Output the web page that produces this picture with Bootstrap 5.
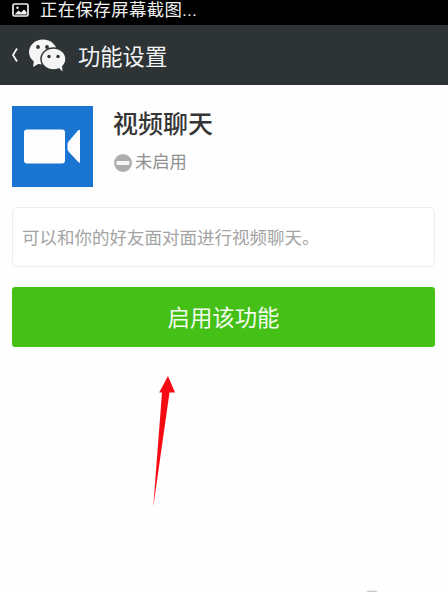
<!DOCTYPE html>
<html lang="zh">
<head>
<meta charset="utf-8">
<title>功能设置</title>
<link href="https://cdn.jsdelivr.net/npm/bootstrap@5.3.0/dist/css/bootstrap.min.css" rel="stylesheet">
<style>
html,body{width:448px;height:592px;overflow:hidden;margin:0;background:#fefefe;}
body{font-family:"Roboto","Noto Sans CJK SC",sans-serif;position:relative;}
.stat-bar{height:25px;background:#000;color:#f0f0f0;font-size:17.4px;line-height:1;padding-left:12px;gap:11px;}
.stat-text{letter-spacing:.4px;margin-top:-4px;}
.stat-icon{margin-top:-6px;}
.app-head{height:60px;background:#2e3336;color:#f2f3f3;padding-left:11px;}
.head-title{font-size:22.3px;margin-left:12px;line-height:1;margin-top:4px;}
.back-icon{margin-right:10px;}
.main-area{padding:21px 13px 0 12px;}
.app-tile{width:81px;height:81px;background:#1a75d2;padding-right:1px;}
.app-name{font-size:25px;font-weight:500;color:#353535;line-height:1;margin-top:6px;}
.app-state{font-size:17.3px;color:#909090;line-height:1;margin-top:17px;gap:3px;margin-left:1px;}
.desc-box{height:60px;margin-top:20px;background:#fff;border:1px solid #eeeeee;border-radius:5px;padding:2px 0 0 9px;font-size:17.5px;color:#a3a3a3;}
.go-btn{display:block;width:100%;height:60px;margin-top:20px;background:#44c017;border:0;border-radius:3px;color:#f4fbf0;font-size:22.4px;line-height:1;padding:2px 0 0;}
.go-btn:hover{background:#44c017;color:#f4fbf0;}
.pointer-arrow{position:absolute;left:150px;top:374px;}
.edge-smudge{position:absolute;left:366px;top:588px;}
</style>
</head>
<body>
<div class="stat-bar d-flex align-items-center">
  <svg class="stat-icon" width="17" height="14" viewBox="0 0 17 14"><rect x="1" y="1" width="15" height="12" rx="1.5" fill="none" stroke="#f0f0f0" stroke-width="1.7"/><path d="M3 11l3.500-3.500 2.500 2 3-3 2.500 2.500V11.500H3z" fill="#f0f0f0"/><circle cx="5.500" cy="4.800" r="1.200" fill="#f0f0f0"/></svg>
  <span class="stat-text">正在保存屏幕截图...</span>
</div>
<header class="app-head d-flex align-items-center">
  <svg class="back-icon" width="7" height="16" viewBox="0 0 7 16"><path d="M6 1.500L2 8l4 6.500" fill="none" stroke="#f2f3f3" stroke-width="1.800"/></svg>
  <svg width="38" height="33" viewBox="0 0 38 33"><ellipse cx="15" cy="13" ry="12.500" rx="14" fill="#f5f5f5"/><path d="M6 21l-1 7 7-4z" fill="#f5f5f5"/><ellipse cx="25.500" cy="20" rx="12.500" ry="11" fill="#f5f5f5" stroke="#2e3336" stroke-width="1.500"/><path d="M31 29l3.500 3.500-.5-6z" fill="#f5f5f5"/><circle cx="10" cy="8" r="1.900" fill="#2e3336"/><circle cx="19" cy="8" r="1.900" fill="#2e3336"/><circle cx="21" cy="17.500" r="1.700" fill="#2e3336"/><circle cx="30" cy="17.500" r="1.700" fill="#2e3336"/></svg>
  <span class="head-title">功能设置</span>
</header>
<main class="main-area">
  <section class="d-flex gap-3 align-items-start">
    <div class="app-tile d-flex align-items-center justify-content-center flex-shrink-0">
      <svg width="56" height="35" viewBox="0 0 56 35"><rect x="0" y="0.500" width="41" height="34" rx="3" fill="#fdfdfd"/><path d="M55 1c1 0 1.500 .5 1.500 1.500v30c0 1-.8 1.700-2 .8L45 23c-1-1-1.500-2-1.500-3v-5c0-1 .5-2 1.500-3l9-10.500c.4-.4.700-.5 1-.5z" fill="#fdfdfd"/></svg>
    </div>
    <div class="ms-1">
      <div class="app-name">视频聊天</div>
      <div class="app-state d-flex align-items-center">
        <svg width="18" height="18" viewBox="0 0 18 18"><circle cx="9" cy="9" r="9" fill="#adadad"/><rect x="2.500" y="7" width="13" height="4" rx="1" fill="#f6f6f6"/></svg>
        <span>未启用</span>
      </div>
    </div>
  </section>
  <div class="desc-box d-flex align-items-center">可以和你的好友面对面进行视频聊天。</div>
  <button type="button" class="btn go-btn">启用该功能</button>
</main>
<svg class="pointer-arrow" width="28" height="136" viewBox="0 0 28 136"><path d="M18 2L25 18.500H19.500L3.200 133.500 12 18.500H9.200z" fill="#f80a12"/></svg>
<svg class="edge-smudge" width="12" height="4" viewBox="0 0 12 4"><ellipse cx="6" cy="3.500" rx="5" ry="1" fill="#c8c8c8"/></svg>
</body>
</html>
